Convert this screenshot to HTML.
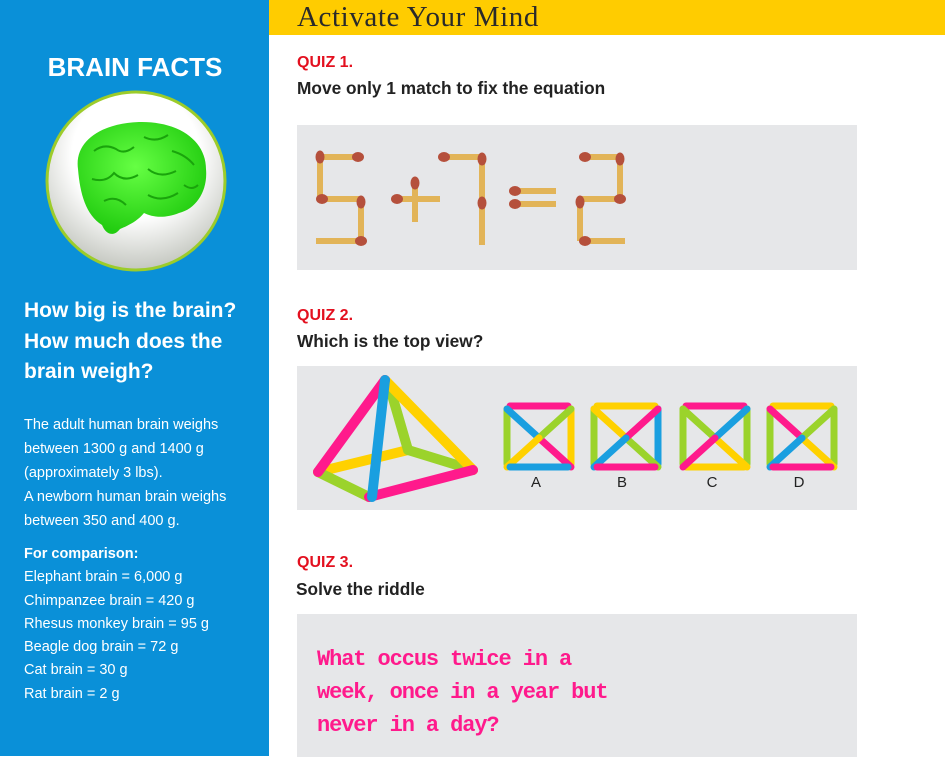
<!DOCTYPE html>
<html><head><style>
body{margin:0;width:945px;height:784px;background:#fff;position:relative;overflow:hidden;font-family:"Liberation Sans",sans-serif}
.a{position:absolute;white-space:nowrap}
.w{color:#fff}
.q{color:#e3101f;font-weight:bold;font-size:16px}
.s{color:#222;font-weight:bold;font-size:17.3px}
.box{position:absolute;background:#e6e7e9;left:297px;width:560px}
.b{font-size:14.5px;line-height:24px}
</style></head><body>
<div class="a" style="left:0;top:0;width:269px;height:756px;background:#0a90d8"></div>
<div class="a" style="left:269px;top:0;width:676px;height:35px;background:#ffcc00"></div>
<div class="a" style="left:297px;top:1px;font-family:'Liberation Serif',serif;font-size:29px;color:#2a2a2a;letter-spacing:0.6px">Activate Your Mind</div>
<div class="a w" style="left:0;width:270px;text-align:center;top:52px;font-size:26px;font-weight:bold">BRAIN FACTS</div>
<svg class="a" style="left:44px;top:89px" width="184" height="184">
<defs><radialGradient id="g" cx="50%" cy="35%" r="65%"><stop offset="0.55" stop-color="#fff"/><stop offset="1" stop-color="#c4c7c0"/></radialGradient>
<radialGradient id="br" cx="45%" cy="40%" r="60%"><stop offset="0" stop-color="#66ff44"/><stop offset="1" stop-color="#22cc10"/></radialGradient></defs>
<circle cx="92" cy="92" r="89" fill="url(#g)" stroke="#9ccc2a" stroke-width="3"/>
<g fill="url(#br)">
<path d="M34 80 C30 52 58 34 95 33 C135 32 162 52 162 80 C164 102 152 120 135 124 C120 130 108 128 100 124 C92 134 80 138 76 140 C70 148 62 146 58 136 C42 126 36 105 34 80Z"/>
</g>
<path d="M50 62 q10-8 22-2 q8 6 18-2 M100 48 q12 6 24-2 M128 62 q14 4 22 14 M48 90 q14 4 22-6 q10 10 24 2 M104 80 q12 10 28 2 M60 112 q12-6 22 4 M104 106 q14 8 30-2 M140 96 q8 6 14 0" stroke="#1aa40c" stroke-width="2" fill="none"/>
</svg>
<div class="a w" style="left:24px;top:296px;font-size:21px;font-weight:bold;line-height:30.5px">How big is the brain?<br>How much does the<br>brain weigh?</div>
<div class="a w b" style="left:24px;top:413px">The adult human brain weighs<br>between 1300 g and 1400 g<br><span style="line-height:21px;display:inline-block">(approximately 3 lbs).</span><br><span style="display:inline-block;margin-top:-6px">A newborn human brain weighs</span><br>between 350 and 400 g.</div>
<div class="a w b" style="left:24px;top:543px;line-height:23.3px"><b>For comparison:</b><br><span style="line-height:21px">Elephant brain = 6,000 g</span><br>Chimpanzee brain = 420 g<br>Rhesus monkey brain = 95 g<br>Beagle dog brain = 72 g<br>Cat brain = 30 g<br>Rat brain = 2 g</div>

<div class="a q" style="left:297px;top:54px">QUIZ 1.</div>
<div class="a s" style="left:297px;top:78px">Move only 1 match to fix the equation</div>
<div class="box" style="top:125px;height:145px"></div>
<svg class="a" style="left:297px;top:125px" width="560" height="145">
<g stroke="#e2b458" stroke-width="6" fill="none">
<path d="M23 32H61M23 32V74M25 74H63M64 74V116M19 116H61"/>
<path d="M100 74H143M118 55V97"/>
<path d="M147 32H185M185 32V120"/>
<path d="M218 66H259M218 79H259"/>
<path d="M285 32H323M323 32V74M283 74H323M283 74V116M285 116H328"/>
</g>
<g fill="#b5503c">
<ellipse cx="23" cy="32" rx="4.5" ry="6.5"/><ellipse cx="61" cy="32" rx="6" ry="5"/><ellipse cx="25" cy="74" rx="6" ry="5"/><ellipse cx="64" cy="77" rx="4.5" ry="6.5"/><ellipse cx="64" cy="116" rx="6" ry="5"/>
<ellipse cx="118" cy="58" rx="4.5" ry="6.5"/><ellipse cx="100" cy="74" rx="6" ry="5"/>
<ellipse cx="147" cy="32" rx="6" ry="5"/><ellipse cx="185" cy="34" rx="4.5" ry="6.5"/><ellipse cx="185" cy="78" rx="4.5" ry="6.5"/>
<ellipse cx="218" cy="66" rx="6" ry="5"/><ellipse cx="218" cy="79" rx="6" ry="5"/>
<ellipse cx="288" cy="32" rx="6" ry="5"/><ellipse cx="323" cy="34" rx="4.5" ry="6.5"/><ellipse cx="323" cy="74" rx="6" ry="5"/><ellipse cx="283" cy="77" rx="4.5" ry="6.5"/><ellipse cx="288" cy="116" rx="6" ry="5"/>
</g></svg>

<div class="a q" style="left:297px;top:307px">QUIZ 2.</div>
<div class="a s" style="left:297px;top:331px">Which is the top view?</div>
<div class="box" style="top:366px;height:144px"></div>
<svg class="a" style="left:297px;top:366px" width="560" height="144" stroke-linecap="round" stroke-width="10" fill="none">
<path d="M21 106L111 84" stroke="#ffd100"/>
<path d="M21 106L72 131" stroke="#9bd32b"/>
<path d="M111 84L176 104" stroke="#9bd32b"/>
<path d="M93 22L111 84" stroke="#9bd32b"/>
<path d="M88 14L176 104" stroke="#ffd100"/>
<path d="M72 131L176 104" stroke="#ff1a8c"/>
<path d="M21 106L88 14" stroke="#ff1a8c"/>
<path d="M88 14L75 131" stroke="#1a9fe0"/>
<g stroke-width="7">
<g transform="translate(210,40)"><path d="M3 0H61" stroke="#ff1a8c"/><path d="M0 3V58" stroke="#9bd32b"/><path d="M64 3V58" stroke="#ffd100"/><path d="M0 3L32 32" stroke="#1a9fe0"/><path d="M32 32L64 61" stroke="#ff1a8c"/><path d="M64 3L32 32" stroke="#9bd32b"/><path d="M32 32L0 61" stroke="#ffd100"/><path d="M3 61H61" stroke="#1a9fe0"/></g>
<g transform="translate(297,40)"><path d="M3 0H61" stroke="#ffd100"/><path d="M0 3V58" stroke="#9bd32b"/><path d="M64 3V58" stroke="#1a9fe0"/><path d="M0 3L32 32" stroke="#ffd100"/><path d="M32 32L64 61" stroke="#9bd32b"/><path d="M64 3L32 32" stroke="#ff1a8c"/><path d="M32 32L0 61" stroke="#1a9fe0"/><path d="M3 61H61" stroke="#ff1a8c"/></g>
<g transform="translate(386,40)"><path d="M3 0H61" stroke="#ff1a8c"/><path d="M0 3V58" stroke="#9bd32b"/><path d="M64 3V58" stroke="#9bd32b"/><path d="M0 3L32 32" stroke="#9bd32b"/><path d="M32 32L64 61" stroke="#ffd100"/><path d="M3 61H61" stroke="#ffd100"/><path d="M64 3L32 32" stroke="#1a9fe0"/><path d="M32 32L0 61" stroke="#ff1a8c"/></g>
<g transform="translate(473,40)"><path d="M3 0H61" stroke="#ffd100"/><path d="M0 3V58" stroke="#9bd32b"/><path d="M64 3V58" stroke="#9bd32b"/><path d="M0 3L32 32" stroke="#ff1a8c"/><path d="M32 32L64 61" stroke="#ffd100"/><path d="M64 3L32 32" stroke="#9bd32b"/><path d="M32 32L0 61" stroke="#1a9fe0"/><path d="M3 61H61" stroke="#ff1a8c"/></g>
</g>
<g fill="#222" stroke="none" font-family="Liberation Sans" font-size="15" text-anchor="middle">
<text x="239" y="121">A</text><text x="325" y="121">B</text><text x="415" y="121">C</text><text x="502" y="121">D</text></g>
</svg>

<div class="a q" style="left:297px;top:554px">QUIZ 3.</div>
<div class="a s" style="left:296px;top:579px">Solve the riddle</div>
<div class="box" style="top:614px;height:143px"></div>
<div class="a" style="left:317px;top:643px;font-family:'Liberation Mono',monospace;font-weight:bold;font-size:22px;line-height:33px;color:#ff1a8c;letter-spacing:-1.1px">What occus twice in a<br>week, once in a year but<br>never in a day?</div>
</body></html>
